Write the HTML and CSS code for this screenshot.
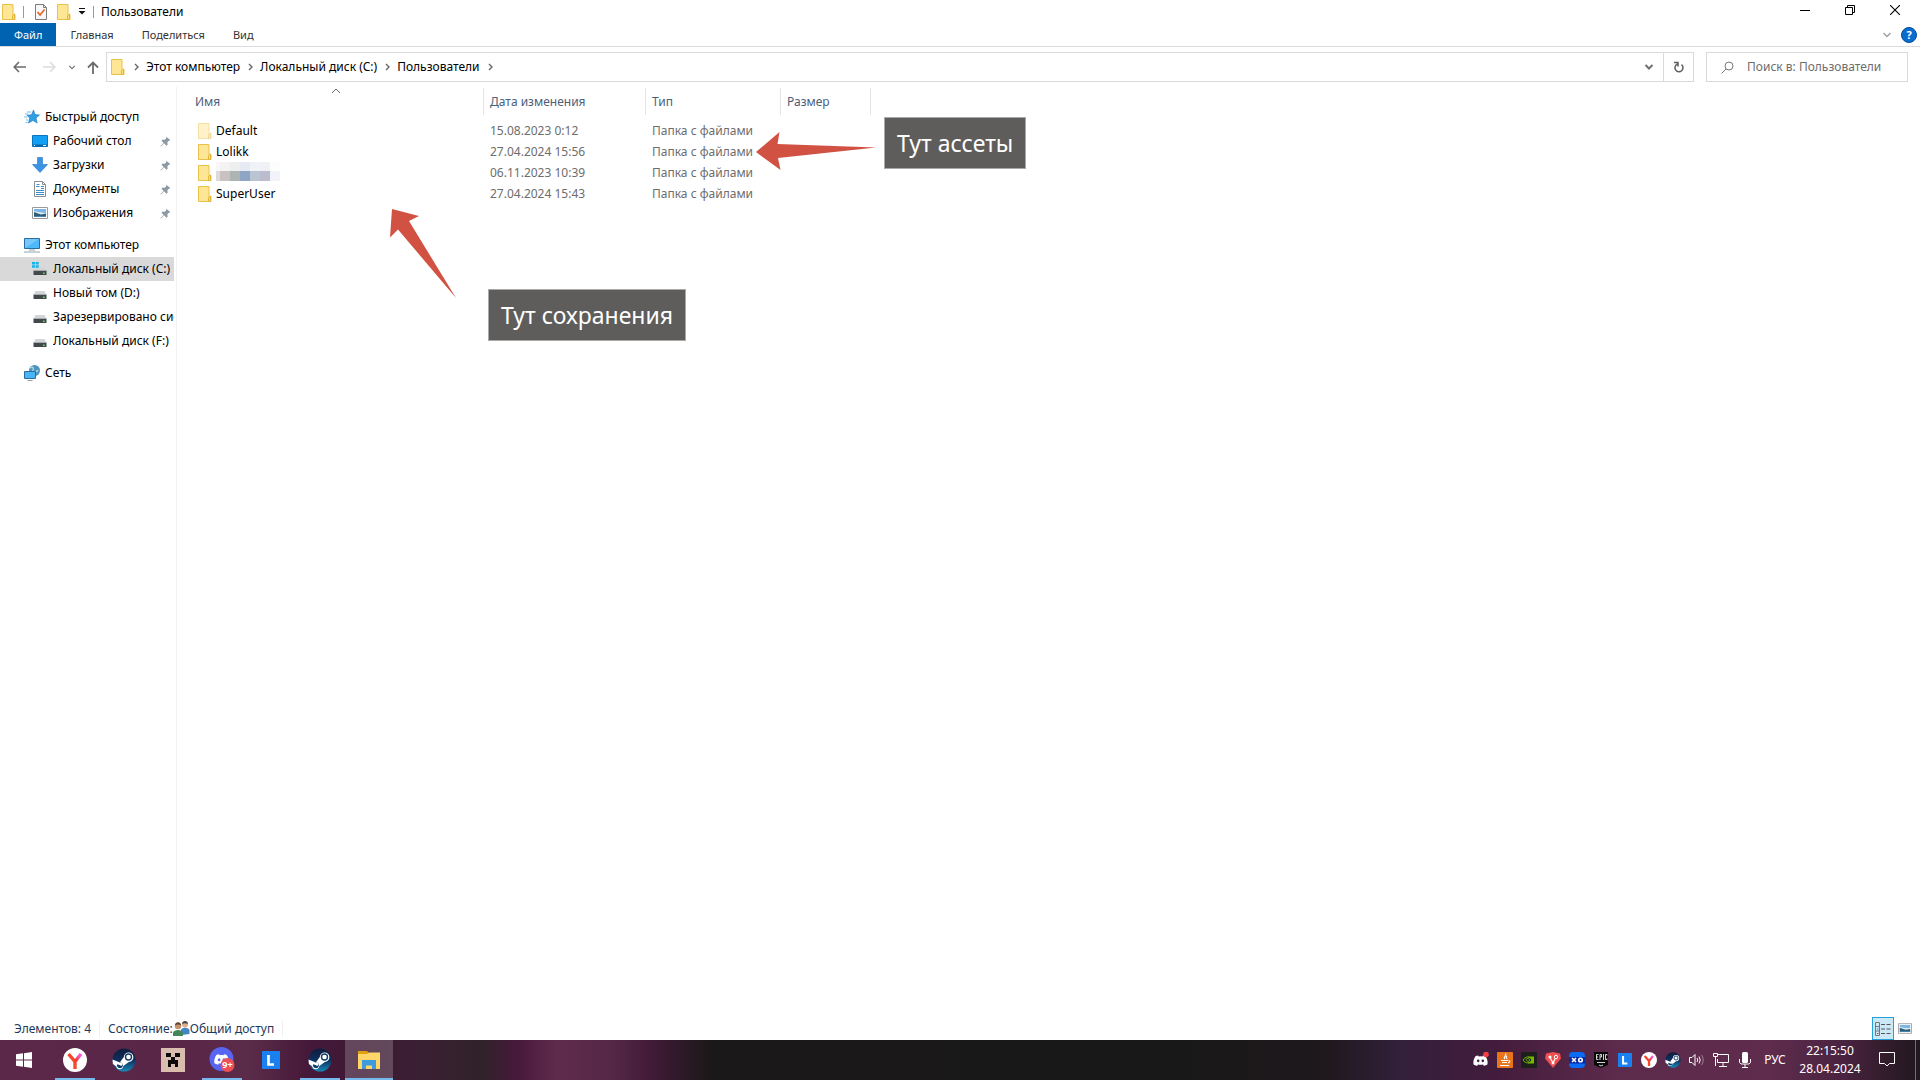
FILE: index.html
```html
<!DOCTYPE html>
<html lang="ru">
<head>
<meta charset="utf-8">
<title>Пользователи</title>
<link rel="stylesheet" href="styles.css">
</head>
<body>
<svg class="sprite" aria-hidden="true">
  <symbol id="folder" viewBox="0 0 14 16"><path d="M.5.5h10.500v10h2v5H.5z" fill="#ffe694" stroke="#e8c24a"/><path d="M10.500 15.500v-4l2-1.500v5.500z" fill="#ffe07a" stroke="#dfb53a"/></symbol>
  <symbol id="chev" viewBox="0 0 6 8"><path d="M1 1l3 3-3 3" fill="none" stroke="currentColor" stroke-width="1.400"/></symbol>
  <symbol id="down" viewBox="0 0 10 8"><path d="M1.500 2L5 5.500 8.500 2" fill="none" stroke="currentColor" stroke-width="var(--w,1.500)"/></symbol>
  <symbol id="pin" viewBox="0 0 12 12"><path d="M6.500.5l5 4-1.500 0.300-2 2 .3 2.700-1.300 1L4.500 8 1 11.500.5 11 4 7.500 1.500 5 2.500 4l2.700.2 1.800-2z" fill="#8d9aa3"/></symbol>
  <symbol id="drive" viewBox="0 0 16 16"><path d="M3.500 6h9l2 4h-13z" fill="#d3d6d9"/><path d="M1.500 9.500h13V14h-13z" fill="#43484b"/><path d="M1.500 9h13v1h-13z" fill="#a9adb0"/><path d="M11 11.500h1.500V13H11z" fill="#5df05a"/></symbol>
  <symbol id="picture" viewBox="0 0 16 12"><path d="M.5.5h15v11H.5z" fill="#fff" stroke="#9a9a9a"/><path d="M2 2h12v4H2z" fill="#7db4e6"/><path d="M2 4l4 1 8 1v2H2z" fill="#dcecf5"/><path d="M2 5l4 1.500 3 1 5-1V10H2z" fill="#2e5d78"/><path d="M2 9h12v1H2z" fill="#4b87b4"/></symbol>
  <symbol id="steam" viewBox="0 0 24 24"><defs><linearGradient id="sg" x2="0" y2="1"><stop offset="0" stop-color="#101c3c"/><stop offset=".5" stop-color="#0d2f5c"/><stop offset="1" stop-color="#1888b8"/></linearGradient></defs><circle cx="12" cy="12" r="11.500" fill="url(#sg)"/><path d="M.5 11.500l7.300 3 4-5.500a4.800 4.800 0 1 1 5 5l-5.500 4a3.600 3.600 0 0 1-7.100.3L.9 16z" fill="#fff"/><circle cx="16.500" cy="9" r="3" fill="#fff" stroke="#143a66" stroke-width="1.400"/><path d="M6 16.500l2 .8a1.500 1.500 0 1 0 .8-2.600l-1.400-.5a3 3 0 1 1-2.300 2" fill="#143a66"/></symbol>
  <symbol id="yandex" viewBox="0 0 24 24"><defs><linearGradient id="yg" y1="1" x2="1" y2="0"><stop offset=".3" stop-color="#ff4b24"/><stop offset=".6" stop-color="#f0402c"/><stop offset=".9" stop-color="#f05ad8"/></linearGradient></defs><circle cx="12" cy="12" r="12" fill="#fff"/><path d="M5.500 6l6.500 7.500L18 6M12 12.500V21" fill="none" stroke="url(#yg)" stroke-width="3.400"/></symbol>
  <symbol id="discord" viewBox="0 0 24 18"><path d="M8 1C5 1.500 3.500 2.500 3.500 2.500 1 6 0 10.500.5 15c2 1.600 4.300 2.300 6 2.600l1.300-2.200c2.700.7 5.700.7 8.400 0l1.300 2.200c1.700-.3 4-1 6-2.600.5-4.500-.5-9-3-12.500 0 0-1.500-1-4.500-1.500l-.8 1.500a18 18 0 0 0-6.400 0z" fill="#fff"/><ellipse cx="8.200" cy="9.600" rx="2.100" ry="2.400" fill="var(--eye)"/><ellipse cx="15.800" cy="9.600" rx="2.100" ry="2.400" fill="var(--eye)"/></symbol>
  <symbol id="ell" viewBox="0 0 18 18"><path d="M0 0h18v18H0z" fill="#1b80ef"/><path d="M6.500 4v9.500H12" fill="none" stroke="#fff" stroke-width="2.600"/></symbol>
</svg>

<header class="titlebar">
  <div class="quick">
    <svg class="i-folder"><use href="#folder"/></svg>
    <span class="sep"></span>
    <button class="plain" aria-label="Свойства"><svg width="12" height="16" viewBox="0 0 12 16"><path d="M.5.5h8l3 3v12H.5z" fill="#f7f7fa" stroke="#7b7b80"/><path d="M8.500.5v3h3" fill="none" stroke="#7b7b80"/><path d="M2.500 8l2.500 3L9.500 5.500" fill="none" stroke="#e8601c" stroke-width="1.600"/></svg></button>
    <button class="plain" aria-label="Новая папка"><svg class="i-folder"><use href="#folder"/></svg></button>
    <button class="plain" aria-label="Настройка панели"><svg width="8" height="7" viewBox="0 0 8 7"><path d="M1 0h6v1H1zM.5 3h7L4 6.500z" fill="#111"/></svg></button>
    <span class="sep"></span>
  </div>
  <h1>Пользователи</h1>
  <div class="winctl">
    <button class="plain" aria-label="Свернуть"><svg width="10" height="10"><path d="M0 5.500h10" stroke="#000"/></svg></button>
    <button class="plain" aria-label="Свернуть в окно"><svg width="10" height="10" fill="none" stroke="#000"><path d="M.5 2.500h7v7h-7zM2.500 2V.5h7v7H8"/></svg></button>
    <button class="plain" aria-label="Закрыть"><svg width="10" height="10"><path d="M0 0l10 10M10 0L0 10" stroke="#000" stroke-width="1.100"/></svg></button>
  </div>
</header>

<nav class="tabs">
  <button class="tab file">Файл</button>
  <button class="tab">Главная</button>
  <button class="tab">Поделиться</button>
  <button class="tab">Вид</button>
  <div class="tabs-end">
    <button class="plain thin" aria-label="Развернуть ленту"><svg width="10" height="8"><use href="#down"/></svg></button>
    <button class="help" aria-label="Справка">?</button>
  </div>
</nav>

<div class="addrbar">
  <div class="arrows">
    <button class="plain" aria-label="Назад"><svg width="13" height="12" fill="none" stroke="#6b6b6b" stroke-width="1.600"><path d="M13 6H1.500M6 1L1.200 6 6 11"/></svg></button>
    <button class="plain" aria-label="Вперёд" disabled><svg width="13" height="12" fill="none" stroke="#dcdcdc" stroke-width="1.600"><path d="M0 6h11.500M7 1l4.800 5L7 11"/></svg></button>
    <button class="plain grey" aria-label="Журнал"><svg width="8" height="7"><use href="#down"/></svg></button>
    <button class="plain" aria-label="Вверх"><svg width="12" height="13" fill="none" stroke="#6b6b6b" stroke-width="1.800"><path d="M6 13V1.500M1 6.500l5-5 5 5"/></svg></button>
  </div>
  <div class="address">
    <svg class="i-folder"><use href="#folder"/></svg>
    <svg class="chev"><use href="#chev"/></svg><button class="crumb">Этот компьютер</button>
    <svg class="chev"><use href="#chev"/></svg><button class="crumb">Локальный диск (C:)</button>
    <svg class="chev"><use href="#chev"/></svg><button class="crumb">Пользователи</button>
    <svg class="chev"><use href="#chev"/></svg>
    <button class="plain drop" aria-label="Предыдущие расположения"><svg width="10" height="8"><use href="#down"/></svg></button>
    <button class="plain refresh" aria-label="Обновить"><svg width="10" height="12" viewBox="0 0 10 12" fill="none" stroke="#606060" stroke-width="1.500"><path d="M3.500 3A4 4 0 1 0 7.500 3.600M0 1.500h4V5.500"/></svg></button>
  </div>
  <label class="search">
    <svg width="13" height="13" fill="none" stroke="#777"><circle cx="8" cy="5" r="4"/><path d="M5 8L.5 12.500"/></svg>
    <input type="text" placeholder="Поиск в: Пользователи" aria-label="Поиск">
  </label>
</div>

<div class="work">
  <aside class="side">
    <ul>
      <li><a href="#" class="root"><svg class="i16" viewBox="0 0 16 16"><path d="M9.500 1l1.500 4.500 4.500.5-3.500 3 1.200 5L9 11.500 4.500 14l1.200-5L3 6.200l4.500-.5z" fill="#2ea0e6" stroke="#1976bb" stroke-width=".6"/><path d="M3 3h4M1 5h3M0 8h3.500M2 11h2M1.500 13.500h2" stroke="#6cc0f0"/></svg><span>Быстрый доступ</span></a></li>
      <li><a href="#"><svg class="i16" viewBox="0 0 16 16"><path d="M.5 2.500h15v11H.5z" fill="#12a0f5" stroke="#0b74be"/><path d="M1 11.500h14v2H1z" fill="#0b67a8"/><path d="M2 12.500h1M11 12.500h3" stroke="#fff"/></svg><span>Рабочий стол</span><svg class="pin"><use href="#pin"/></svg></a></li>
      <li><a href="#"><svg class="i16" viewBox="0 0 16 16"><path d="M5.500.5h5v7h5L8 15.500.5 7.500h5z" fill="#3b93e4" stroke="#2f7fcd" stroke-width=".7"/></svg><span>Загрузки</span><svg class="pin"><use href="#pin"/></svg></a></li>
      <li><a href="#"><svg class="i16" viewBox="0 0 16 16"><path d="M2.500.5h8l3 3v12h-11z" fill="#fff" stroke="#8a8f94"/><path d="M10.500.5v3h3" fill="none" stroke="#8a8f94"/><path d="M4 5.500h3.500M4.500 3.500h3M9 5.500h3M9 7.500h3M4 9.500h8M4 11.500h8M4 13.500h8" stroke="#3f8fc4"/></svg><span>Документы</span><svg class="pin"><use href="#pin"/></svg></a></li>
      <li><a href="#"><svg class="i16"><use href="#picture"/></svg><span>Изображения</span><svg class="pin"><use href="#pin"/></svg></a></li>
    </ul>
    <ul>
      <li><a href="#" class="root"><svg class="i16" viewBox="0 0 16 16"><path d="M.5 1.500h15v10H.5z" fill="#4db8fa" stroke="#2c6d9e"/><path d="M1 2h14L1 11z" fill="#8fd2fc" opacity=".6"/><path d="M5 13h6M0 15h16" stroke="#8fa5b5"/></svg><span>Этот компьютер</span></a></li>
      <li><a href="#" class="current"><svg class="i16" viewBox="0 0 16 16"><use href="#drive"/><path d="M0 1h3v2.500H0zM3.700 1h3v2.500h-3zM0 4.200h3v2.500H0zM3.700 4.200h3v2.500h-3z" fill="#12b4ee"/></svg><span>Локальный диск (C:)</span></a></li>
      <li><a href="#"><svg class="i16"><use href="#drive"/></svg><span>Новый том (D:)</span></a></li>
      <li><a href="#"><svg class="i16"><use href="#drive"/></svg><span>Зарезервировано системой</span></a></li>
      <li><a href="#"><svg class="i16"><use href="#drive"/></svg><span>Локальный диск (F:)</span></a></li>
    </ul>
    <ul>
      <li><a href="#" class="root"><svg class="i16" viewBox="0 0 16 16"><circle cx="10.500" cy="5.500" r="5.500" fill="#4f93b8"/><path d="M6 3c3-2 4 0 3 2s3 3 5 0" fill="none" stroke="#a9d6e8" stroke-width="1.500"/><path d="M.5 6.500h11v7H.5z" fill="#49b4f8" stroke="#2c6d9e"/><path d="M3.500 15.500h5" stroke="#8fa5b5"/></svg><span>Сеть</span></a></li>
    </ul>
  </aside>

  <main class="files">
    <table>
      <colgroup><col class="c-name"><col class="c-date"><col class="c-type"><col class="c-size"></colgroup>
      <thead><tr><th>Имя<svg class="sort" viewBox="0 0 10 6"><path d="M1 5l4-4 4 4" fill="none" stroke="#666"/></svg></th><th>Дата изменения</th><th>Тип</th><th>Размер</th></tr></thead>
      <tbody>
        <tr><td><div class="name dim"><svg class="i-folder"><use href="#folder"/></svg>Default</div></td><td>15.08.2023 0:12</td><td>Папка с файлами</td><td></td></tr>
        <tr><td><div class="name"><svg class="i-folder"><use href="#folder"/></svg>Lolikk</div></td><td>27.04.2024 15:56</td><td>Папка с файлами</td><td></td></tr>
        <tr><td><div class="name"><svg class="i-folder"><use href="#folder"/></svg><svg class="mosaic" viewBox="0 0 64 19" shape-rendering="crispEdges"><path fill="#f8f7f8" d="M0 0h4v9H0z"/><path fill="#f4f2f2" d="M4 0h10v9H4z"/><path fill="#edefee" d="M14 0h10v9H14z"/><path fill="#e6eaf2" d="M24 0h10v9H24z"/><path fill="#eff3f7" d="M34 0h10v9H34z"/><path fill="#f0f0f5" d="M44 0h10v9H44z"/><path fill="#fcfdfd" d="M54 0h10v9H54z"/><path fill="#dbdbdb" d="M0 9h4v10H0z"/><path fill="#c9c2c1" d="M4 9h10v10H4z"/><path fill="#adb5b4" d="M14 9h10v10H14z"/><path fill="#8ea5c3" d="M24 9h10v10H24z"/><path fill="#b9c5d3" d="M34 9h10v10H34z"/><path fill="#bbbdce" d="M44 9h10v10H44z"/><path fill="#f2f3f8" d="M54 9h10v10H54z"/></svg></div></td><td>06.11.2023 10:39</td><td>Папка с файлами</td><td></td></tr>
        <tr><td><div class="name"><svg class="i-folder"><use href="#folder"/></svg>SuperUser</div></td><td>27.04.2024 15:43</td><td>Папка с файлами</td><td></td></tr>
      </tbody>
    </table>
    <svg class="mark mark-assets" viewBox="0 0 120 39"><path d="M0 20L23.500 0 21.500 12 120 15.500 22 26l2.500 12z" fill="#d15243"/></svg>
    <p class="note note-assets">Тут ассеты</p>
    <svg class="mark mark-saves" viewBox="0 0 67 90"><path d="M2 0l27 7-10 5 47 77L8 20.500 0 28.500z" fill="#d15243"/></svg>
    <p class="note note-saves">Тут сохранения</p>
  </main>
</div>

<footer class="status">
  <span class="count">Элементов: 4</span>
  <span class="state">Состояние:<svg width="17" height="16" viewBox="0 0 17 16"><circle cx="12" cy="3.500" r="3" fill="#dcae8c"/><path d="M9 3c0-4 6-4 6 0-2-1-4-1-6 0z" fill="#444"/><path d="M8 14V9c1-3 7-3 8.500 0v4z" fill="#3f86c2"/><circle cx="5" cy="5" r="3.200" fill="#c9916a"/><path d="M2 4.500C2 0 8 0 8.200 4.500 6 3 4 3 2 4.500z" fill="#5b4632"/><path d="M0 15v-3.500C1 8 9 8 10 11.500V15z" fill="#42875c"/></svg>Общий доступ</span>
  <div class="views">
    <button class="plain view on" aria-label="Таблица"><svg width="16" height="14" viewBox="0 0 16 14" fill="none"><path d="M.5.5h4v13h-4zM.5 4.500h4M.5 9h4" stroke="#777"/><path d="M6 2.500h4M11.500 2.500h4M6 7h4M11.500 7h4M6 11.500h4M11.500 11.500h4" stroke="#555"/><path d="M2 7h1.500" stroke="#28d"/><path d="M2 11.500h1.500" stroke="#d33"/></svg></button>
    <button class="plain view" aria-label="Крупные значки"><svg width="14" height="11"><use href="#picture"/></svg></button>
  </div>
</footer>

<div class="taskbar">
  <button class="task start" aria-label="Пуск"><svg width="16" height="16" viewBox="0 0 16 16"><path d="M0 2.300L7 1.300V7.500H0zM8 1.200L16 0v7.500H8zM0 8.500h7v6.200l-7-1zM8 8.500h8V16l-8-1.200z" fill="#fff"/></svg></button>
  <button class="task run" aria-label="Браузер"><svg width="24" height="24"><use href="#yandex"/></svg></button>
  <button class="task" aria-label="Steam"><svg width="24" height="24"><use href="#steam"/></svg></button>
  <button class="task" aria-label="Minecraft"><svg width="24" height="24" viewBox="0 0 24 24" shape-rendering="crispEdges"><path d="M0 0h24v24H0z" fill="#d9beb0"/><path d="M5 5h5v4H5zM14 5h5v4h-5zM10 9h4v3h3v7h-3v-3h-4v3H7v-7h3z" fill="#0c0c0c"/></svg></button>
  <button class="task run" aria-label="Discord"><svg class="blurple" width="26" height="26" viewBox="0 0 26 26"><circle cx="12.500" cy="12" r="12" fill="#5865f2"/><svg x="5" y="6.500" width="15" height="11.500"><use href="#discord"/></svg><circle cx="18.500" cy="18" r="7" fill="#ec4f55"/><text x="18.500" y="21" class="badge">9+</text></svg></button>
  <button class="task" aria-label="L"><svg width="18" height="18"><use href="#ell"/></svg></button>
  <button class="task run" aria-label="Steam"><svg width="24" height="24"><use href="#steam"/></svg></button>
  <button class="task active" aria-label="Проводник"><svg width="22" height="18" viewBox="0 0 22 18"><path d="M0 0h9l2 2v3H0z" fill="#e0a010"/><path d="M0 3h9l2-1.500h11V18H0z" fill="#ffd667"/><path d="M4 9h14v9h-4v-3.500H8V18H4z" fill="#3f9be0"/></svg></button>

  <div class="tray">
    <button class="plain" aria-label="Discord"><svg class="dark" width="16" height="16" viewBox="0 0 16 16"><svg x="0" y="3" width="15" height="11"><use href="#discord"/></svg><circle cx="13" cy="2.500" r="2.800" fill="#f23f43"/></svg></button>
    <button class="plain" aria-label="Java"><svg width="16" height="16"><rect width="16" height="16" rx="1" fill="#e8741c"/><path d="M8.500 1.500c2 2-3 3-.5 5.500M10 4c-2 1.500 0 2 0 3M4 8.500h7M5 10.500h5M11.500 8.500c2 0 1.500 2-.5 2.500M3 13.500h9" fill="none" stroke="#fff" stroke-width="1.100"/></svg></button>
    <button class="plain" aria-label="NVIDIA"><svg width="16" height="16"><path d="M0 0h16v16H0z" fill="#1c1f1c"/><path d="M7 4.500h6v7H7z" fill="#76b900"/><path d="M2 8c2.500-4 7-4 9 0-2 3.500-6.500 4-9 0zM4.500 8c1.500-2 3-2 4.500 0-1.500 2-3 1.500-3.500 0" fill="#1c1f1c" stroke="#76b900"/></svg></button>
    <button class="plain" aria-label="VPN"><svg width="16" height="16"><path d="M1 1.500L8 0l7 1.500 1 5L8 16 0 6.500z" fill="#ef4f4f"/><path d="M5 5.500l3 5.500 2.500-5" fill="none" stroke="#fff" stroke-width="1.200"/><circle cx="5" cy="5" r="1.600" fill="#fff"/><circle cx="11" cy="5" r="1.700" fill="#ef4f4f" stroke="#fff"/><circle cx="8" cy="11" r="1.400" fill="#fff"/></svg></button>
    <button class="plain" aria-label="XO"><svg width="16" height="16"><rect width="16" height="16" rx="4" fill="#0a6cf5"/><path d="M0 5h16v6.500H0z" fill="#0628a0"/><path d="M3 6l4 4M7 6l-4 4" stroke="#fff" stroke-width="1.600"/><circle cx="11.500" cy="8" r="1.800" fill="none" stroke="#fff" stroke-width="1.600"/></svg></button>
    <button class="plain" aria-label="Epic Games"><svg width="16" height="16"><path d="M1 0h14v13l-7 3-7-3z" fill="#0b0b0b"/><path d="M5.500 2.500h-2v5h2M3.500 5h1.500M7 8V2.500h1.500V5H7M10.500 2v6M14 3.500v-1h-1.500v5H14v-1M4 10.500h8M6 13l2 1 2-1" fill="none" stroke="#e8e8e8" stroke-width=".9"/></svg></button>
    <button class="plain" aria-label="L"><svg width="14" height="14"><use href="#ell"/></svg></button>
    <button class="plain" aria-label="Браузер"><svg width="16" height="16"><use href="#yandex"/></svg></button>
    <button class="plain" aria-label="Steam"><svg width="16" height="16"><use href="#steam"/></svg></button>
    <button class="plain" aria-label="Громкость"><svg width="16" height="14" fill="none" stroke="#fff"><path d="M.5 4.500H3l3-3v11l-3-3H.5zM8 5q1.500 2 0 4M10 3.500q2.500 3.500 0 7"/><path d="M12.500 2q3.500 5 0 10" opacity=".4"/></svg></button>
    <button class="plain" aria-label="Сеть"><svg width="16" height="14" fill="none" stroke="#fff"><path d="M5 1.500h10.500v8h-11V6M10 10v3M6 13.500h8M.5.5h4v3h-4zM2.500 4v9"/></svg></button>
    <button class="plain" aria-label="Микрофон"><svg width="12" height="16"><rect x="3" width="6" height="11" rx="1.500" fill="#fff"/><path d="M.5 7v3.500L2 12h8l1.500-1.500V7M6 12v3M3 15.500h6" fill="none" stroke="#fff"/></svg></button>
    <button class="plain lang">РУС</button>
    <button class="plain clock"><span>22:15:50</span><span>28.04.2024</span></button>
    <button class="plain notif" aria-label="Уведомления"><svg width="16" height="16" fill="none" stroke="#fff"><path d="M.5.500h15v11h-5L8 14l-2.500-2.500h-5z"/></svg></button>
  </div>
</div>
</body>
</html>
```
FILE: styles.css
```css
* { box-sizing: border-box; }
body {
  margin: 0;
  min-height: 100vh;
  display: flex;
  flex-direction: column;
  background: #fff;
  color: #000;
  font: 12px/16px "Noto Sans", "Open Sans", sans-serif;
}
button, input { font: inherit; color: inherit; }
svg { flex: none; display: block; }
ul { list-style: none; margin: 0; padding: 0; }
.sprite { position: absolute; width: 0; height: 0; }
.plain {
  background: none;
  border: 0;
  padding: 0;
  display: flex;
  align-items: center;
  justify-content: center;
}
.i-folder { width: 14px; height: 16px; }
.i16 { width: 16px; height: 16px; }

/* title bar */
.titlebar { display: flex; align-items: center; height: 23px; }
.quick { display: flex; align-items: center; padding-left: 2px; gap: 7px; }
.quick > :nth-child(3) { margin-left: 4px; }
.quick > :nth-child(4) { margin-left: 3px; }
.sep { width: 1px; height: 12px; background: #999; }
h1 { margin: 0 0 0 7px; font: inherit; }
.winctl { margin-left: auto; padding-right: 3px; display: flex; align-self: flex-start; }
.winctl .plain { width: 45px; height: 20px; }

/* ribbon tabs */
.tabs { display: flex; height: 24px; border-bottom: 1px solid #dadbdc; font-size: 11px; }
.tab { border: 0; background: none; padding: 0 14px; color: #333; }
.tab.file { background: #0063b1; color: #fff; }
.tabs-end { margin-left: auto; display: flex; align-items: center; gap: 9px; padding-right: 3px; }
.thin { color: #a0a0a0; }
.help {
  width: 16px;
  height: 16px;
  padding: 0;
  border: 1px solid #004e98;
  border-radius: 50%;
  background: #0a6ccf;
  color: #fff;
  font-weight: 700;
  line-height: 14px;
}

/* address row */
.addrbar { display: flex; align-items: center; padding: 5px 12px 5px 13px; }
.arrows { display: flex; align-items: center; width: 93px; gap: 17px; }
.grey { color: #777; margin: 0 -6px 0 -5px; }
.address {
  flex: 1;
  display: flex;
  align-items: center;
  height: 30px;
  padding-left: 4px;
  border: 1px solid #d9d9d9;
}
.address .i-folder { margin-right: 3px; }
.chev { width: 6px; height: 8px; margin: 0 4px 0 6px; color: #666; }
.crumb { border: 0; background: none; padding: 0 2px; }
.drop { margin-left: auto; width: 28px; color: #707070; --w: 2; }
.refresh { width: 30px; height: 28px; border-left: 1px solid #d9d9d9; }
.search {
  display: flex;
  align-items: center;
  gap: 13px;
  width: 202px;
  height: 30px;
  margin-left: 12px;
  padding-left: 14px;
  border: 1px solid #d9d9d9;
}
.search input { flex: 1; min-width: 0; border: 0; padding: 0; outline: 0; background: none; }
.search input::placeholder { color: #6d6d6d; opacity: 1; }

/* navigation pane */
.work { flex: 1; display: flex; }
.side { width: 177px; padding: 18px 2px 0 0; border-right: 1px solid #f2f2f2; }
.side ul { margin-bottom: 8px; }
.side a {
  display: flex;
  align-items: center;
  gap: 5px;
  height: 24px;
  padding-left: 32px;
  color: inherit;
  text-decoration: none;
}
.side a.root { padding-left: 24px; }
.side a.current { background: #d9d9d9; }
.side span { flex: 1; min-width: 0; overflow: hidden; white-space: nowrap; }
.pin { width: 11px; height: 11px; margin-right: 3px; }

/* file list */
.files { flex: 1; position: relative; padding-top: 1px; }
table { width: 694px; table-layout: fixed; border-collapse: separate; border-spacing: 0; }
.c-name { width: 307px; }
.c-date { width: 162px; }
.c-type { width: 135px; }
.c-size { width: 90px; }
th {
  position: relative;
  height: 27px;
  padding: 0 0 0 6px;
  border-right: 1px solid #e5e5e5;
  color: #4c607a;
  font-weight: 400;
  text-align: left;
}
th:first-child, td:first-child { padding-left: 18px; }
.sort { position: absolute; top: 0; left: 154px; width: 10px; height: 6px; }
tbody::before { content: ""; display: block; height: 5px; }
td { height: 21px; padding: 0 0 0 6px; color: #6d6d6d; white-space: nowrap; }
.name { display: flex; align-items: center; gap: 4px; height: 21px; padding-left: 3px; color: #000; }
.dim .i-folder { opacity: .5; }
.mosaic { width: 64px; height: 19px; align-self: flex-start; }

/* annotations laid over the list */
.mark, .note { position: absolute; }
.mark-assets { left: 579px; top: 45px; width: 120px; height: 39px; }
.mark-saves { left: 213px; top: 122px; width: 67px; height: 90px; }
.note {
  margin: 0;
  padding: 9px 12px;
  border: 1px solid #a9a9a9;
  background: #5e5d5b;
  color: #fff;
  font-size: 23px;
  line-height: 32px;
  white-space: nowrap;
}
.note-assets { left: 707px; top: 30px; }
.note-saves { left: 311px; top: 202px; }

/* status bar */
.status { display: flex; align-items: center; height: 23px; padding-left: 14px; color: #1e395b; }
.count, .state { display: flex; align-items: center; border-right: 1px solid #f0f0f0; }
.count { padding-right: 8px; margin-right: 8px; }
.state { padding-right: 8px; }
.views { margin-left: auto; padding-right: 4px; display: flex; }
.view { width: 22px; height: 23px; }
.view.on { background: #cbe8f6; border: 1px solid #26a0da; }

/* taskbar */
.taskbar {
  display: flex;
  height: 40px;
  color: #fff;
  background: linear-gradient(90deg, #5c2849 0%, #5a2647 10%, #5b2c49 13%, #46193a 16%, #3c1833 19%, #3b2034 22%, #2f2229 25%, #48193c 27%, #5f2b4d 29%, #552747 32%, #401a36 34%, #1b1819 37%, #181818 60%, #1e181c 69%, #33203a 73%, #431c3c 78%, #5c2a4b 84%, #5f2c4d 92%, #4a2340 96%, #2a1a25 99%, #201820 100%);
}
.task {
  position: relative;
  display: flex;
  align-items: center;
  justify-content: center;
  width: 48px;
  margin-right: 1px;
  padding: 0;
  border: 0;
  background: none;
}
.task.start { margin-right: 3px; }
.task.active { background: rgba(255, 255, 255, .2); }
.run::after, .active::after {
  content: "";
  position: absolute;
  bottom: 0;
  left: 4px;
  right: 4px;
  height: 2px;
  background: #76b9ed;
}
.active::after { left: 0; right: 0; }
.blurple { --eye: #5865f2; }
.dark { --eye: #3a2038; }
.badge { fill: #fff; font-size: 9px; font-weight: 700; text-anchor: middle; }
.tray { margin-left: auto; display: flex; }
.tray .plain { width: 24px; }
.tray .plain.lang { width: 36px; }
.tray .plain.clock { width: 74px; flex-direction: column; line-height: 18px; }
.tray .plain.notif { width: 49px; padding-right: 8px; border-right: 1px solid #7a6a76; margin-right: 4px; }
```
